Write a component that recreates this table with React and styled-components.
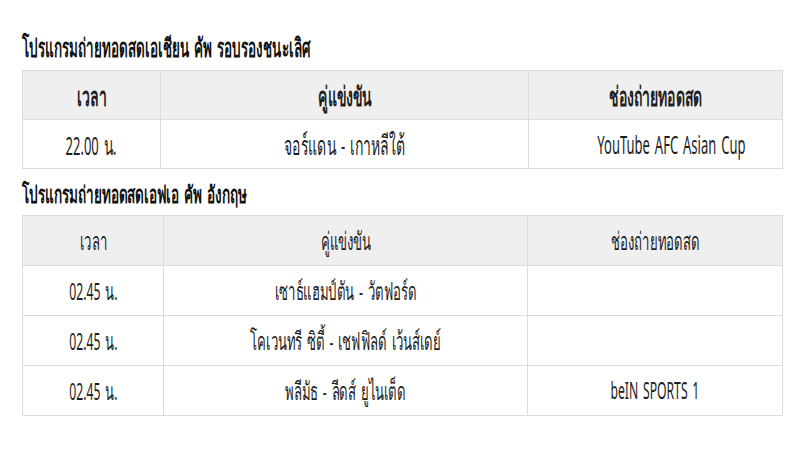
import React from "react";
import styled, { createGlobalStyle } from "styled-components";

const Global = createGlobalStyle`
  html, body { margin: 0; padding: 0; background: #fff; }
  body { font-family: "Noto Sans", "Liberation Sans", sans-serif; color: #222; }
`;

const Page = styled.div`
  width: 800px;
  height: 450px;
  box-sizing: border-box;
  padding: 32px 18px 0 22px;
  display: flex;
  flex-direction: column;
`;

const Title = styled.h2`
  margin: ${(p) => p.$margin};
  font-size: ${(p) => p.$size}px;
  font-weight: 700;
  line-height: 30px;
  height: 30px;
  color: #111;
  white-space: nowrap;
`;

const Squeeze = styled.span`
  display: inline-block;
  transform: scaleX(${(p) => p.$scale});
  transform-origin: ${(p) => (p.$left ? "left" : "center")} center;
  white-space: nowrap;
  word-spacing: 3px;
`;

const ThaiRun = styled.span`
  font-size: 1.08em;
`;

const Table = styled.table`
  width: 760px;
  border-collapse: collapse;
  margin: ${(p) => p.$margin};
  table-layout: fixed;
`;

const Th = styled.th`
  background: #efefef;
  border: 1px solid #dcdcdc;
  height: ${(p) => p.$h}px;
  padding: 0;
  line-height: 1;
  text-align: center;
  font-size: ${(p) => p.$size}px;
  font-weight: ${(p) => (p.$bold ? 700 : 400)};
  color: #1e1e1e;
`;

const Td = styled.td`
  border: 1px solid #dcdcdc;
  height: ${(p) => p.$h}px;
  padding: 0;
  line-height: 1;
  text-align: center;
  font-size: ${(p) => p.$size}px;
  color: #1e1e1e;
`;

function Text({ children }) {
  const parts = String(children).split(/([\u0E00-\u0E7F]+)/);
  return parts.map((p, i) =>
    /[\u0E00-\u0E7F]/.test(p) ? <ThaiRun key={i}>{p}</ThaiRun> : <React.Fragment key={i}>{p}</React.Fragment>
  );
}

const first = [["22.00 น.", "จอร์แดน - เกาหลีใต้", "YouTube AFC Asian Cup"]];
const second = [
  ["02.45 น.", "เซาธ์แฮมป์ตัน - วัตฟอร์ด", ""],
  ["02.45 น.", "โคเวนทรี ซิตี้ - เชฟฟิลด์ เว้นส์เดย์", ""],
  ["02.45 น.", "พลีมัธ - ลีดส์ ยูไนเต็ด", "beIN SPORTS 1"],
];

function Schedule({ rows, widths, size, scale, h, boldHead, margin }) {
  return (
    <Table $margin={margin}>
      <colgroup>
        {widths.map((w, i) => (
          <col key={i} style={{ width: w }} />
        ))}
      </colgroup>
      <thead>
        <tr>
          {["เวลา", "คู่แข่งขัน", "ช่องถ่ายทอดสด"].map((hd) => (
            <Th key={hd} $size={size} $h={h} $bold={boldHead}>
              <Squeeze $scale={scale}>
                <Text>{hd}</Text>
              </Squeeze>
            </Th>
          ))}
        </tr>
      </thead>
      <tbody>
        {rows.map((r, i) => (
          <tr key={i}>
            {r.map((c, j) => (
              <Td key={j} $size={size} $h={h}>
                <Squeeze $scale={scale}>
                  <Text>{c}</Text>
                </Squeeze>
              </Td>
            ))}
          </tr>
        ))}
      </tbody>
    </Table>
  );
}

export default function App() {
  return (
    <>
      <Global />
      <Page>
        <Title $size={24} $margin="0">
          <Squeeze $left $scale={0.52}>
            <Text>โปรแกรมถ่ายทอดสดเอเชียน คัพ รอบรองชนะเลิศ</Text>
          </Squeeze>
        </Title>
        <Schedule rows={first} widths={[138, 368, 254]} size={25} scale={0.52} h={48} boldHead margin="8px 0 0 0" />
        <Title $size={22} $margin="10px 0 0 0">
          <Squeeze $left $scale={0.57}>
            <Text>โปรแกรมถ่ายทอดสดเอฟเอ คัพ อังกฤษ</Text>
          </Squeeze>
        </Title>
        <Schedule rows={second} widths={[141, 364, 255]} size={23} scale={0.53} h={49} margin="6px 0 0 0" />
      </Page>
    </>
  );
}
